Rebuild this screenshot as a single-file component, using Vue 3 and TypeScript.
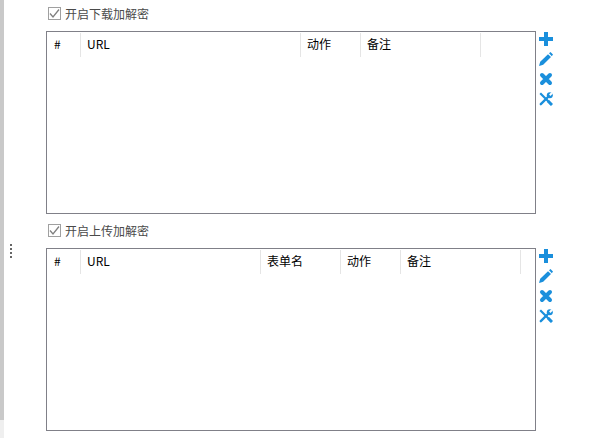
<script setup lang="ts">
interface Col { label: string; width: number }
interface Section { title: string; cols: Col[] }
const sections: Section[] = [
  { title: '开启下载加解密', cols: [
    { label: '#', width: 34 }, { label: 'URL', width: 220 }, { label: '动作', width: 60 }, { label: '备注', width: 120 } ] },
  { title: '开启上传加解密', cols: [
    { label: '#', width: 34 }, { label: 'URL', width: 180 }, { label: '表单名', width: 80 }, { label: '动作', width: 60 }, { label: '备注', width: 120 } ] },
]
</script>

<template>
  <div class="page">
    <div class="rail"><div class="thumb"></div></div>
    <div class="grip"><i></i><i></i><i></i><i></i></div>
    <div class="content">
      <section v-for="s in sections" :key="s.title" class="section">
        <label class="check">
          <span class="box">
            <svg width="11" height="11" viewBox="0 0 11 11"><path d="M1 5.500 L4 9 L10 1.500" fill="none" stroke="#808080" stroke-width="1.300"/></svg>
          </span>
          <span class="title">{{ s.title }}</span>
        </label>
        <div class="row">
          <div class="table">
            <div class="head">
              <div v-for="c in s.cols" :key="c.label" class="cell" :style="{ width: c.width + 'px' }">{{ c.label }}</div>
            </div>
          </div>
          <div class="tools">
            <svg width="14" height="14" viewBox="0 0 14 14"><path d="M5 0h4v5h5v4H9v5H5V9H0V5h5z" fill="#1a8fdc"/></svg>
            <svg width="14" height="14" viewBox="0 0 14 14"><path d="M11.500 0 14 2.500 12.800 4.200 10 1.300zM9 2.200 12 5 4.200 12.800 0 14 1.200 9.800z" fill="#1a8fdc"/></svg>
            <svg width="14" height="14" viewBox="0 0 14 14"><path d="M3 3L11 11M11 3L3 11" fill="none" stroke="#1a8fdc" stroke-width="4" stroke-linecap="round"/></svg>
            <svg width="14" height="14" viewBox="0 0 14 14">
              <path d="M1.200 1.200L12 12" fill="none" stroke="#1a8fdc" stroke-width="2.200"/>
              <path d="M1.800 12.200L10 4" fill="none" stroke="#1a8fdc" stroke-width="2.400" stroke-linecap="round"/>
              <circle cx="10.800" cy="3.200" r="3" fill="#1a8fdc"/>
              <path d="M10.800 3.200L13.200 .8" stroke="#fff" stroke-width="2"/>
              <path d="M9 9L13 13" fill="none" stroke="#1a8fdc" stroke-width="3"/>
            </svg>
          </div>
        </div>
      </section>
    </div>
  </div>
</template>

<style scoped>
.page {
  position: relative;
  display: flex;
  width: 602px;
  height: 438px;
  overflow: hidden;
  background: #fff;
  font-family: "Noto Sans CJK SC", "Noto Sans", sans-serif;
  font-size: 12px;
}
.rail {
  width: 4px;
  flex: none;
  background: #efefef;
}
.thumb {
  height: 420px;
  background: #c9c9c9;
}
.grip {
  position: absolute;
  left: 10px;
  top: 244px;
  display: flex;
  flex-direction: column;
  gap: 2px;
}
.grip i {
  display: block;
  width: 2px;
  height: 2px;
  background: #666;
}
.content {
  padding: 4px 0 0 42px;
}
.section {
  height: 217px;
}
.check {
  display: flex;
  align-items: center;
  gap: 4px;
  height: 18px;
  padding-left: 2px;
}
.box {
  display: flex;
  align-items: center;
  justify-content: center;
  width: 13px;
  height: 13px;
  box-sizing: border-box;
  border: 1px solid #a0a0a0;
}
.title {
  color: #4a4a4a;
  font-size: 12px;
}
.row {
  display: flex;
  gap: 3px;
  margin-top: 9px;
}
.table {
  width: 490px;
  height: 183px;
  box-sizing: border-box;
  border: 1px solid #808088;
  padding-top: 1px;
}
.head {
  display: flex;
  height: 24px;
}
.cell {
  box-sizing: border-box;
  flex: none;
  border-right: 1px solid #e5e5e5;
  padding-left: 6px;
  color: #000;
  line-height: 22px;
}
.cell:first-child {
  padding-left: 7px;
}
.tools {
  display: flex;
  flex-direction: column;
  gap: 6px;
  padding-top: 1px;
}
</style>
